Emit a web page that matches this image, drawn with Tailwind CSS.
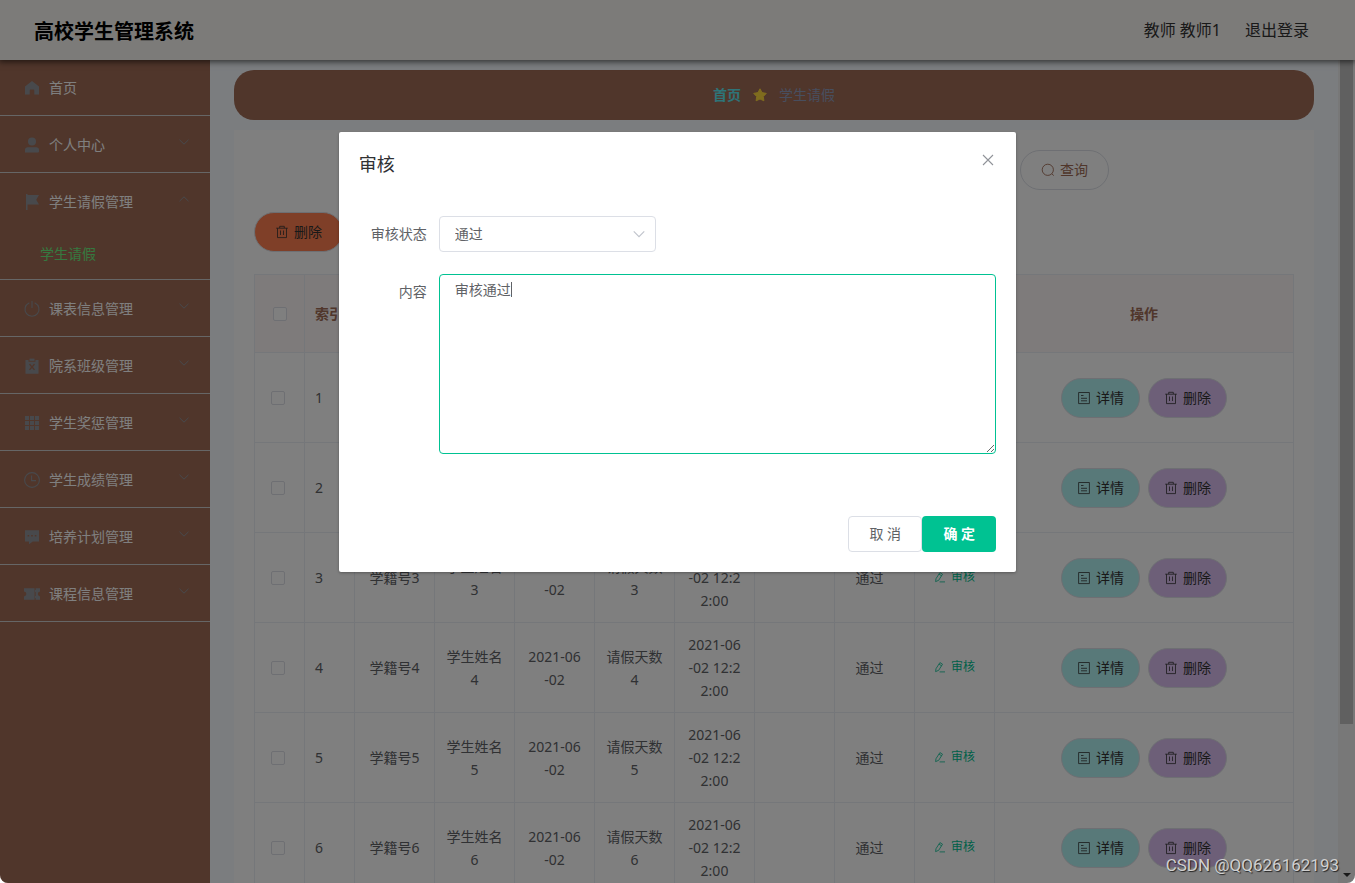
<!DOCTYPE html>
<html lang="zh-CN">
<head>
<meta charset="utf-8">
<meta name="viewport" content="width=device-width, initial-scale=1">
<title>高校学生管理系统</title>
<script src="https://cdn.jsdelivr.net/npm/@tailwindcss/browser@4"></script>
</head>
<body class="bg-white font-['Noto_Sans','Noto_Sans_CJK_SC',sans-serif] text-sm text-[#606266]">

<svg class="hidden" aria-hidden="true">
  <symbol id="i-home" viewBox="0 0 18 18"><path fill="currentColor" d="M9 2 16 7.6V15.5H11.3V11.5Q11.3 10.6 10.4 10.6H7.6Q6.7 10.6 6.7 11.5V15.5H2V7.6Z"/></symbol>
  <symbol id="i-user" viewBox="0 0 18 18"><circle cx="9" cy="5.4" r="4" fill="currentColor"/><path fill="currentColor" d="M2 16.5V14Q2 11.2 5 11.2H13Q16 11.2 16 14V15.5Q16 16.5 15 16.5Z"/></symbol>
  <symbol id="i-flag" viewBox="0 0 18 18"><path fill="currentColor" d="M3 1H4.5V2H16L13.2 6.8 16 11.6H4.5V17H3Z"/></symbol>
  <symbol id="i-power" viewBox="0 0 18 18"><path fill="none" stroke="currentColor" stroke-width="1.1" stroke-linecap="round" d="M9 1.2V7.5M6 3A7 7 0 1 0 12 3"/></symbol>
  <symbol id="i-claim" viewBox="0 0 18 18"><path fill="currentColor" fill-rule="evenodd" d="M2.5 3H5.5V4.8H12.5V3H15.5V16.8H2.5ZM6 7.4 8 9.9 6 12.4 7 13.2 9 10.9 11 13.2 12 12.4 10 9.9 12 7.4 11 6.6 9 8.9 7 6.6Z"/><path fill="currentColor" d="M6.5 1.6H11.5V3.9H6.5Z"/></symbol>
  <symbol id="i-grid" viewBox="0 0 18 18"><path fill="currentColor" d="M2 2H6V6H2ZM7 2H11V6H7ZM12 2H16V6H12ZM2 7H6V11H2ZM7 7H11V11H7ZM12 7H16V11H12ZM2 12H6V16H2ZM7 12H11V16H7ZM12 12H16V16H12Z"/></symbol>
  <symbol id="i-clock" viewBox="0 0 18 18"><g fill="none" stroke="currentColor" stroke-width="1.1"><circle cx="9" cy="9" r="7.4"/><path d="M8.6 4.5V9.6H13"/></g></symbol>
  <symbol id="i-chat" viewBox="0 0 18 18"><path fill="currentColor" fill-rule="evenodd" d="M2 2.2H16V13.4H9.8L6 16.2V13.4H2ZM4.6 7V8.6H6.2V7ZM8.2 7V8.6H9.8V7ZM11.8 7V8.6H13.4V7Z"/></symbol>
  <symbol id="i-ticket" viewBox="0 0 18 18"><path fill="currentColor" d="M1 3.2H11.6V14.8H1V11.4Q3.4 11 3.4 9T1 6.6ZM12.6 3.2H17V6.6Q14.8 7 14.8 9T17 11.4V14.8H12.6V13H12V11H12.6V7H12V5H12.6Z"/></symbol>
  <symbol id="i-down" viewBox="0 0 12 12"><path fill="none" stroke="currentColor" d="M1.5 3.8 6 8.2 10.5 3.8"/></symbol>
  <symbol id="i-up" viewBox="0 0 12 12"><path fill="none" stroke="currentColor" d="M1.5 8.2 6 3.8 10.5 8.2"/></symbol>
  <symbol id="i-star" viewBox="0 0 14 14"><path fill="currentColor" stroke="currentColor" stroke-linejoin="round" d="M7 .8 9 4.6 13.3 5.4 10.3 8.5 10.9 12.8 7 11 3.1 12.8 3.7 8.5 .7 5.4 5 4.6Z"/></symbol>
  <symbol id="i-search" viewBox="0 0 14 14"><g fill="none" stroke="currentColor" stroke-width=".9"><circle cx="6.8" cy="6.8" r="5.6"/><path d="M10.8 10.8 12.8 12.6"/></g></symbol>
  <symbol id="i-trash" viewBox="0 0 14 14"><path fill="none" stroke="currentColor" stroke-width=".8" d="M1.2 3.2H12.8M4.7 3V1.3H9.3V3M2.5 3.2V12.6H11.5V3.2M5.5 5.5V10M8.5 5.5V10"/></symbol>
  <symbol id="i-doc" viewBox="0 0 14 14"><path fill="none" stroke="currentColor" stroke-width=".8" d="M1.6 1.5H12.4V12.6H1.6ZM4 4.5H6.5M4 7.3H10M4 9.8H10"/></symbol>
  <symbol id="i-edit" viewBox="0 0 12 12"><path fill="none" stroke="currentColor" stroke-width=".8" d="M5.9 1.6 8.5 3.2 4.7 9.3 1.6 10.6 2 7.7ZM5 3.1 7.6 4.8M5.6 10.9H11"/></symbol>
  <symbol id="i-close" viewBox="0 0 16 16"><path fill="none" stroke="currentColor" stroke-width="1.1" d="M3 3 13 13M13 3 3 13"/></symbol>
</svg>

<div class="relative flex h-screen flex-col overflow-hidden rounded-b-lg bg-[#f6faff]">
  <header class="relative z-10 flex h-[60px] shrink-0 items-center justify-between bg-[#f8f6f2] pr-[46px] pl-[34px] shadow-[0_1px_6px_1px_rgba(0,0,0,0.6)]">
    <h1 class="pt-[3px] text-xl font-bold text-black">高校学生管理系统</h1>
    <div class="flex gap-6 text-base text-[#333]">
      <span>教师 教师1</span>
      <button type="button">退出登录</button>
    </div>
  </header>

  <div class="flex min-h-0 flex-1">
    <nav class="w-[210px] shrink-0 bg-[#a06c56] text-white">
      <a href="#" class="flex h-14 items-center border-b border-[#ccc] pl-[23px]"><svg class="mr-2 size-[18px] text-[#909399]"><use href="#i-home"/></svg>首页</a>
      <div id="menu"></div>
    </nav>

    <main class="min-w-0 flex-1 px-6 pt-2.5">
      <div class="flex h-[50px] items-center justify-center gap-3 rounded-[20px] bg-[#a06c56]">
        <a href="#" class="font-bold text-[#5ce8f0]">首页</a>
        <svg class="size-3.5 text-[#ffd83c]"><use href="#i-star"/></svg>
        <span class="text-[#909cbc]">学生请假</span>
      </div>

      <section class="mt-2.5 bg-white p-5">
        <form class="mx-auto flex max-w-[670px] items-center gap-3">
          <label for="q1">学籍号</label><input id="q1" class="h-10 min-w-0 flex-1 rounded border border-[#dcdfe6]">
          <label for="q2">学生姓名</label><input id="q2" class="h-10 min-w-0 flex-1 rounded border border-[#dcdfe6]">
          <button type="button" class="flex h-10 items-center gap-[5px] rounded-[20px] border border-[#dcdfe6] px-5 text-[#a06c56]"><svg class="size-3.5"><use href="#i-search"/></svg>查询</button>
        </form>
        <button type="button" class="mt-[22px] flex h-10 items-center gap-[5px] rounded-[20px] border border-[#dcdfe6] bg-[#ff7f50] px-5 text-[#333]"><svg class="size-3.5"><use href="#i-trash"/></svg>删除</button>

        <table class="mt-[22px] w-full table-fixed border-separate border-spacing-0 border-t border-l border-[#ebeef5] text-center leading-[23px]">
          <colgroup><col class="w-[50px]"><col class="w-[50px]"><col class="w-20"><col class="w-20"><col class="w-20"><col class="w-20"><col class="w-20"><col class="w-20"><col class="w-20"><col class="w-20"><col></colgroup>
          <thead class="text-[#a06c56] [&_th]:h-[78px] [&_th]:border-r [&_th]:border-b [&_th]:border-[#ebeef5] [&_th]:bg-[#fcf6f7]">
            <tr>
              <th><input type="checkbox" aria-label="全选" class="block mx-auto size-3.5 appearance-none rounded-xs border border-[#dcdfe6] bg-white"></th>
              <th class="overflow-hidden pl-2.5 text-left whitespace-nowrap">索引</th>
              <th>学籍号</th><th>学生姓名</th><th>请假日期</th><th>请假天数</th><th>申请时间</th><th>审核回复</th><th>审核状态</th><th>审核</th>
              <th>操作</th>
            </tr>
          </thead>
          <tbody id="rows" class="[&_td]:h-[90px] [&_td]:border-r [&_td]:border-b [&_td]:border-[#ebeef5]"></tbody>
        </table>
      </section>
    </main>

    <div class="flex w-[17px] shrink-0 flex-col items-center justify-between bg-[#f1f1f1]" aria-hidden="true">
      <div class="h-[664px] max-h-[81%] w-[13px] bg-[#c1c1c1]"></div>
      <svg class="mb-1 h-2 w-2" viewBox="0 0 8 8"><path fill="#333" d="M0 2H8L4 6Z"/></svg>
    </div>
  </div>

  <div class="absolute inset-0 z-20 bg-black/50"></div>

  <div role="dialog" aria-labelledby="dlg" class="absolute inset-x-0 top-[15vh] z-30 mx-auto w-1/2 rounded-xs bg-white shadow-[0_1px_3px_rgba(0,0,0,0.3)]">
    <div class="flex items-start justify-between px-5 pt-5 pb-2.5">
      <h2 id="dlg" class="text-lg leading-6 text-[#303133]">审核</h2>
      <button type="button" aria-label="关闭" class="text-[#909399]"><svg class="size-4"><use href="#i-close"/></svg></button>
    </div>
    <form class="px-5 pt-[30px] pb-[62px]">
      <div class="flex">
        <label for="st" class="w-20 shrink-0 pr-3 text-right leading-9">审核状态</label>
        <div class="relative w-[217px]">
          <select id="st" class="block h-9 w-full appearance-none rounded border border-[#dcdfe6] bg-white px-[15px]"><option>通过</option><option>未通过</option></select>
          <svg class="pointer-events-none absolute top-[11px] right-[10px] size-3.5 text-[#c0c4cc]"><use href="#i-down"/></svg>
        </div>
      </div>
      <div class="mt-[22px] flex">
        <label for="ct" class="w-20 shrink-0 pr-3 text-right leading-9">内容</label>
        <div class="relative flex-1">
          <textarea id="ct" class="block h-[180px] w-full resize rounded border border-[#00c292] px-[15px] py-1 leading-[21px] outline-none">审核通过</textarea>
          <span class="absolute top-2 left-[72px] h-[15px] w-px bg-[#606266]"></span>
        </div>
      </div>
    </form>
    <div class="flex justify-end px-5 pb-5">
      <button type="button" class="h-9 w-[74px] rounded border border-[#dcdfe6] bg-white">取 消</button>
      <button type="button" class="h-9 w-[74px] rounded bg-[#00c292] font-bold text-white">确 定</button>
    </div>
  </div>

  <div class="absolute right-4 bottom-1.5 z-40 font-['Roboto',sans-serif] text-[17px] leading-6 text-[#d0d0d0] [text-shadow:1px_1px_1px_#222]">CSDN @QQ626162193</div>
</div>

<script>
const menus = [['user', '个人中心'], ['flag', '学生请假管理'], ['power', '课表信息管理'], ['claim', '院系班级管理'], ['grid', '学生奖惩管理'], ['clock', '学生成绩管理'], ['chat', '培养计划管理'], ['ticket', '课程信息管理']];
document.getElementById('menu').innerHTML = menus.map(([icon, name]) => {
  const open = icon === 'flag';
  return `<div class="border-b border-[#ccc]">
    <button type="button" class="flex h-14 w-full items-center pt-0.5 pr-5 pl-[23px] text-left">
      <svg class="mr-2 size-[18px] text-[#909399]"><use href="#i-${icon}"/></svg><span class="flex-1">${name}</span>
      <svg class="mb-1.5 size-3 text-[#909399]"><use href="#i-${open ? 'up' : 'down'}"/></svg>
    </button>
    ${open ? '<a href="#" class="flex h-[50px] items-center pl-10 text-[#6cf080]">学生请假</a>' : ''}
  </div>`;
}).join('');

document.getElementById('rows').innerHTML = [1, 2, 3, 4, 5, 6].map(n => `<tr>
  <td class="pl-4"><input type="checkbox" aria-label="选择第${n}行" class="block size-3.5 appearance-none rounded-xs border border-[#dcdfe6] bg-white"></td>
  <td class="pl-2.5 text-left">${n}</td>
  <td>学籍号${n}</td>
  <td>学生姓名<br>${n}</td>
  <td>2021-06<br>-02</td>
  <td>请假天数<br>${n}</td>
  <td>2021-06<br>-02 12:2<br>2:00</td>
  <td></td>
  <td class="pr-2.5">通过</td>
  <td><button type="button" class="inline-flex items-center gap-[5px] pt-0.5 text-xs text-[#00c292]"><svg class="size-3"><use href="#i-edit"/></svg>审核</button></td>
  <td><div class="flex justify-center gap-2">
    <button type="button" class="flex h-10 items-center gap-[5px] rounded-[20px] border border-[#dcdfe6] bg-[#b0f2f2] px-[15px] text-[#333]"><svg class="size-3.5"><use href="#i-doc"/></svg>详情</button>
    <button type="button" class="flex h-10 items-center gap-[5px] rounded-[20px] border border-[#dcdfe6] bg-[#dabef0] px-[15px] text-[#333]"><svg class="size-3.5"><use href="#i-trash"/></svg>删除</button>
  </div></td>
</tr>`).join('');
</script>
</body>
</html>
